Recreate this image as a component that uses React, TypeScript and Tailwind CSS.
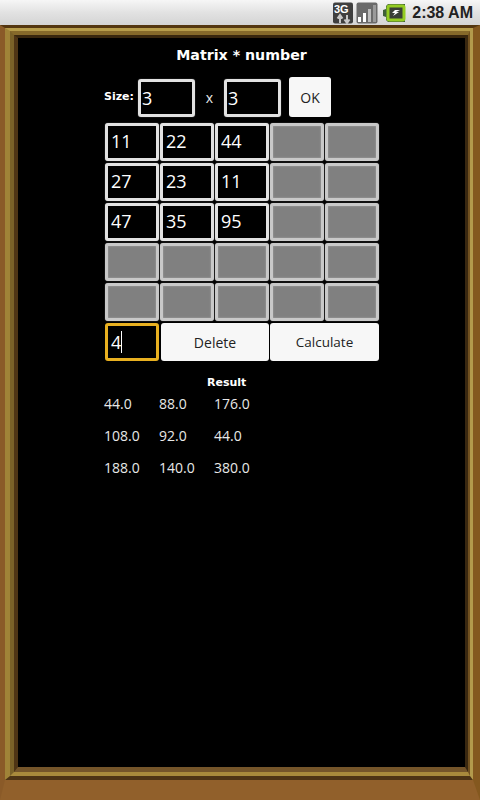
const values = [
  ["11", "22", "44", "", ""],
  ["27", "23", "11", "", ""],
  ["47", "35", "95", "", ""],
  ["", "", "", "", ""],
  ["", "", "", "", ""],
];

const results = [
  ["44.0", "88.0", "176.0"],
  ["108.0", "92.0", "44.0"],
  ["188.0", "140.0", "380.0"],
];

function Cell({ value, disabled }: { value: string; disabled?: boolean }) {
  return (
    <div
      className={
        disabled
          ? "w-[54px] h-[38px] rounded-[3px] border-[3px] border-[#c8c8c8] bg-[#808080] shadow-[0_0_1px_#999999,inset_0_0_2px_#aaaaaa]"
          : "w-[54px] h-[38px] rounded-[3px] border-[3px] border-[#e2e2e2] bg-black text-white text-[18px] leading-[31px] pl-[3px] shadow-[0_0_1px_#999999]"
      }
    >
      {value}
    </div>
  );
}

function StatusIcons() {
  return (
    <div className="flex items-center">
      <svg width="22" height="22" viewBox="0 0 22 22">
        <rect x="1" y="0.5" width="20" height="21" rx="2" fill="#3f3f3f" />
        <text x="2" y="11" fontSize="11" fontWeight="700" fill="#fff" fontFamily="Liberation Sans">3G</text>
        <path d="M8 14v7M5.5 16.5L8 13l2.5 3.5M15 13v7M12.5 17.5L15 21l2.5-3.5" stroke="#c8c8c8" strokeWidth="2" fill="none" />
      </svg>
      <svg width="22" height="22" viewBox="0 0 22 22" className="ml-[2px]">
        <rect x="0.5" y="0.5" width="21" height="21" rx="2" fill="#6a6a6a" />
        <rect x="2" y="15" width="3" height="5" fill="#fff" />
        <rect x="7" y="11" width="3" height="9" fill="#fff" />
        <rect x="12" y="7" width="3" height="13" fill="#bdbdbd" />
        <rect x="17" y="3" width="3" height="17" fill="#9a9a9a" />
      </svg>
      <svg width="24" height="22" viewBox="0 0 24 22" className="ml-[4px]">
        <path d="M1 8l3-1V4l2-2h17v18H6l-2-2v-3l-3-1z" fill="#3f5f38" />
        <rect x="6" y="4" width="16" height="14" rx="1.5" fill="#3a3f36" stroke="#94cc22" strokeWidth="3" />
        <path d="M18 8h-5l-3 3h3l-2 3 6-4h-3z" fill="#fff" />
      </svg>
    </div>
  );
}

export default function App() {
  return (
    <div className="w-[480px] h-[800px] flex flex-col bg-black font-['Open_Sans','Noto_Sans',sans-serif] overflow-hidden">
      <div className="h-[25px] shrink-0 flex items-center justify-end gap-[6px] pr-[7px] bg-gradient-to-b from-[#f6f6f6] via-[#e2e2e2] to-[#d4d4d4]">
        <StatusIcons />
        <span className="text-[16px] font-semibold text-[#222] font-['Liberation_Sans',sans-serif]">2:38 AM</span>
      </div>

      {/* wooden frame, one nested border per band */}
      <div className="flex-1 flex flex-col border-t-[3px] border-t-[#54360f] border-l-[5px] border-l-[#8a5a28] border-r-[7px] border-r-[#84581f] border-b-[20px] border-b-[#91602b]">
        <div className="flex-1 flex flex-col border-t-[3px] border-t-[#b69c4a] border-l-[5px] border-l-[#a08338] border-r-[3px] border-r-[#b39a4c] border-b-[4px] border-b-[#4e3415]">
          <div className="flex-1 flex flex-col border-t-[4px] border-t-[#86692a] border-l-[4px] border-l-[#7a6128] border-r-[2px] border-r-[#70501f] border-b-[4px] border-b-[#a98a3c]">
            <div className="flex-1 flex flex-col border-t-[3px] border-t-[#38260e] border-l-[4px] border-l-[#4e3415] border-r-[3px] border-r-[#3a2810] border-b-[5px] border-b-[#75552a] bg-black">
              <div className="h-[27px] mt-[1px] flex items-end justify-center text-white text-[14.2px] font-bold font-['DejaVu_Sans',sans-serif] leading-[22px]">
                Matrix * number
              </div>

              <div className="mt-[11px] flex items-end pl-[86px] h-[40px]">
                <span className="self-center w-[34px] text-[11px] font-bold text-white font-['DejaVu_Sans',sans-serif]">Size:</span>
                <div className="w-[57px] h-[38px] rounded-[3px] border-[3px] border-[#e2e2e2] text-white text-[18px] leading-[32px] pl-[1px] shadow-[0_0_1px_#999999]">3</div>
                <span className="self-center w-[29px] text-center text-[14px] text-[#e8e8e8]">x</span>
                <div className="w-[57px] h-[38px] rounded-[3px] border-[3px] border-[#e2e2e2] text-white text-[18px] leading-[32px] pl-[1px] shadow-[0_0_1px_#999999]">3</div>
                <button className="ml-[8px] w-[42px] h-[40px] rounded-[3px] bg-[#f7f7f7] text-[14px] text-[#222]">OK</button>
              </div>

              <div className="mt-[6px] pl-[87px] flex flex-col gap-[2px]">
                {values.map((row, r) => (
                  <div key={r} className="flex gap-[1px] h-[38px]">
                    {row.map((v, c) => (
                      <Cell key={c} value={v} disabled={r > 2 || c > 2} />
                    ))}
                  </div>
                ))}
                <div className="flex gap-[1px] h-[38px]">
                  <div className="w-[54px] h-[38px] rounded-[3px] border-[3px] border-[#e8b020] bg-black text-white text-[18px] pl-[3px] flex items-center">
                    4<span className="w-[1px] h-[22px] bg-white" />
                  </div>
                  <button className="ml-[1px] w-[108px] h-[38px] rounded-[3px] bg-[#f7f7f7] text-[14px] text-[#222]">Delete</button>
                  <button className="w-[109px] h-[38px] rounded-[3px] bg-[#f7f7f7] text-[13.5px] text-[#222]">Calculate</button>
                </div>
              </div>

              <div className="mt-[13px] pl-[189px] text-white text-[11px] font-bold leading-[18px] font-['DejaVu_Sans',sans-serif]">Result</div>
              <div className="mt-[1px] pl-[86px] flex flex-col gap-[12px]">
                {results.map((row, r) => (
                  <div key={r} className="flex h-[20px] items-center text-[14px] text-[#e8e8e8]">
                    {row.map((v, c) => (
                      <span key={c} className="w-[55px]">{v}</span>
                    ))}
                  </div>
                ))}
              </div>
            </div>
          </div>
        </div>
      </div>
    </div>
  );
}
